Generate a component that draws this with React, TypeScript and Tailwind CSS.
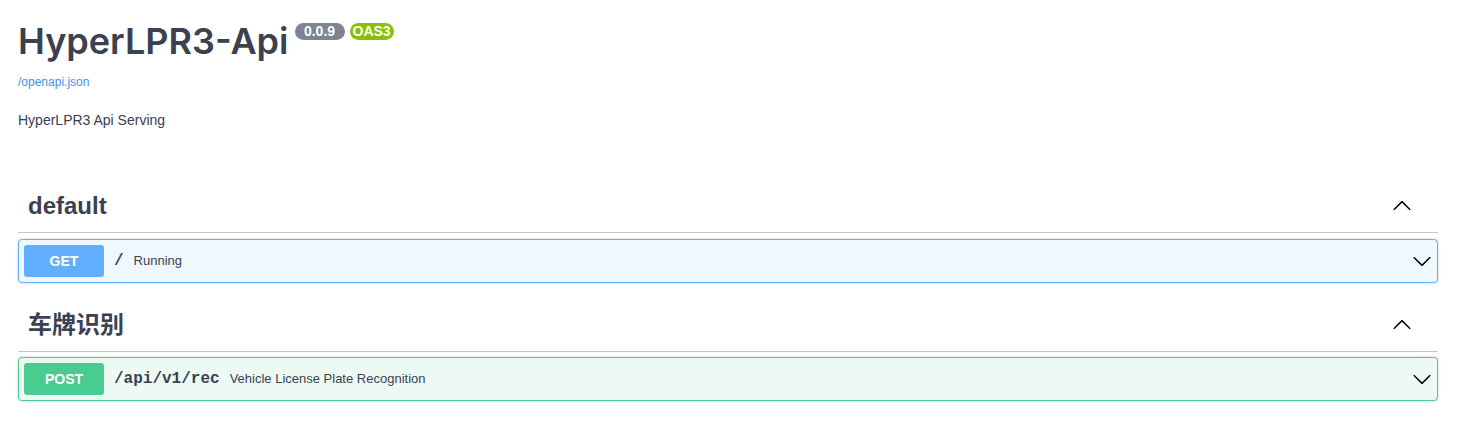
import React from 'react';

const sans = '"Liberation Sans", Arial, sans-serif';
const cjk = '"Liberation Sans", "Noto Sans CJK SC", sans-serif';
const mono = '"Liberation Mono", "Courier New", monospace';

function Chevron({ up }: { up?: boolean }) {
  return (
    <svg width="20" height="20" viewBox="0 0 20 20" className={up ? 'rotate-180' : ''} aria-hidden="true">
      <path
        fill="#000"
        d="M17.418 6.109c.272-.268.709-.268.979 0s.271.701 0 .969l-7.908 7.83c-.27.268-.707.268-.979 0l-7.908-7.83c-.27-.268-.27-.701 0-.969.271-.268.709-.268.979 0L10 13.25l7.418-7.141z"
      />
    </svg>
  );
}

interface OpProps {
  method: string;
  path: string;
  summary: string;
  kind: 'get' | 'post';
}

function Operation({ method, path, summary, kind }: OpProps) {
  const box =
    kind === 'get'
      ? 'border-[#61affe] bg-[#eff7ff]'
      : 'border-[#49cc90] bg-[#edfaf4]';
  const badge = kind === 'get' ? 'bg-[#61affe]' : 'bg-[#49cc90]';
  return (
    <div className={`flex h-[44px] items-center rounded-[4px] border px-[5px] shadow-[0_0_3px_rgba(0,0,0,0.19)] ${box}`}>
      <span
        className={`flex h-[32px] w-[80px] items-center justify-center rounded-[3px] text-[14px] font-bold text-white ${badge}`}
        style={{ fontFamily: sans }}
      >
        {method}
      </span>
      <span className="px-[10px] text-[16px] font-bold text-[#3b4151]" style={{ fontFamily: mono }}>
        {path}
      </span>
      <span className="flex-1 text-[13px] text-[#3b4151]" style={{ fontFamily: sans }}>
        {summary}
      </span>
      <Chevron />
    </div>
  );
}

function Tag({ name }: { name: string }) {
  return (
    <div className="flex h-[53px] items-center border-b border-[rgba(59,65,81,0.3)] pl-[10px] pr-[26px]">
      <h3 className="flex-1 text-[24px] font-bold text-[#3b4151]" style={{ fontFamily: cjk }}>
        {name}
      </h3>
      <Chevron up />
    </div>
  );
}

export default function App() {
  return (
    <div className="min-h-[427px] bg-white pl-[18px] pr-[24px] pt-[21px] text-[#3b4151]" style={{ fontFamily: sans }}>
      <div className="flex items-start">
        <h2
          className="text-[36px] font-semibold leading-[40px] text-[#3b4151]"
          style={{ fontFamily: '"Inter", "Liberation Sans", sans-serif' }}
        >
          HyperLPR3-Api
        </h2>
        <span className="ml-[6px] mt-[2px] flex h-[17px] w-[50px] items-center justify-center rounded-full bg-[#7d8492] text-[14px] font-bold text-white">
          0.0.9
        </span>
        <span className="ml-[5px] mt-[2px] flex h-[17px] items-center rounded-full bg-[#89bf04] px-[3px] text-[14px] font-bold text-white">
          OAS3
        </span>
      </div>
      <div className="mt-[14px] text-[12px] leading-[14px]">
        <a href="#" className="text-[#4990e2]">/openapi.json</a>
      </div>
      <p className="mt-[23px] text-[14px] leading-[16px] text-[#3b4151]">HyperLPR3 Api Serving</p>

      <div className="mt-[52px]">
        <Tag name="default" />
        <div className="mt-[6px]">
          <Operation kind="get" method="GET" path="/" summary="Running" />
        </div>
      </div>

      <div className="mt-[16px]">
        <Tag name="车牌识别" />
        <div className="mt-[5px]">
          <Operation kind="post" method="POST" path="/api/v1/rec" summary="Vehicle License Plate Recognition" />
        </div>
      </div>
    </div>
  );
}
